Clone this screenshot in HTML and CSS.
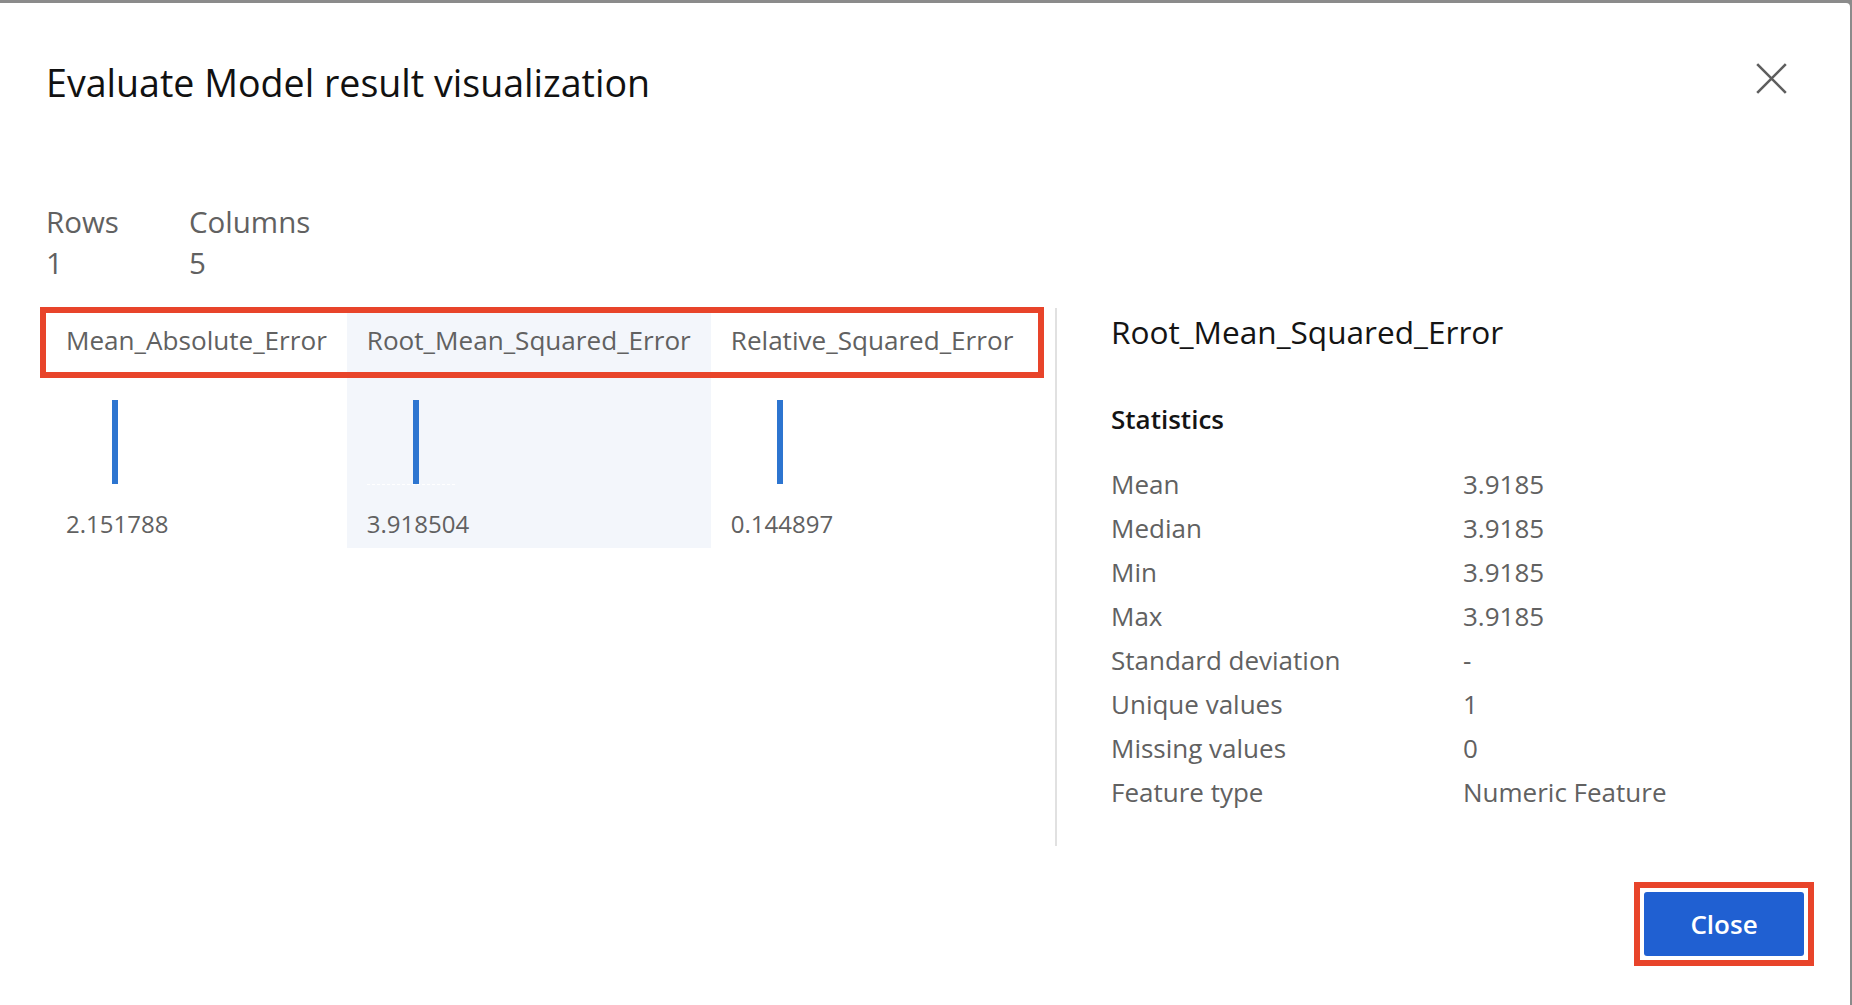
FILE: index.html
```html
<!DOCTYPE html>
<html lang="en">
<head>
<meta charset="utf-8">
<title>Evaluate Model result visualization</title>
<link rel="stylesheet" href="styles.css">
</head>
<body>
<div class="dialog">
  <header class="dlg-head">
    <h1 class="dlg-title">Evaluate Model result visualization</h1>
    <button class="icon-close" aria-label="Close">
      <svg width="31" height="31" viewBox="0 0 31 31"><path d="M1.2 1.2L29.8 29.8M29.8 1.2L1.2 29.8" stroke="#5e5e5e" stroke-width="2.6" fill="none"/></svg>
    </button>
  </header>

  <div class="meta">
    <div class="meta-item meta-rows">
      <div class="meta-label">Rows</div>
      <div class="meta-value">1</div>
    </div>
    <div class="meta-item">
      <div class="meta-label">Columns</div>
      <div class="meta-value">5</div>
    </div>
  </div>

  <div class="dlg-body">
    <div class="left-pane">
      <div class="cols">
        <div class="col">
          <div class="col-head">Mean_Absolute_Error</div>
          <div class="col-chart"><div class="bar"></div></div>
          <div class="col-value">2.151788</div>
        </div>
        <div class="col col-selected">
          <div class="col-head">Root_Mean_Squared_Error</div>
          <div class="col-chart"><div class="bar"></div></div>
          <div class="col-value">3.918504</div>
        </div>
        <div class="col">
          <div class="col-head">Relative_Squared_Error</div>
          <div class="col-chart"><div class="bar"></div></div>
          <div class="col-value">0.144897</div>
        </div>
      </div>
    </div>

    <div class="right-pane">
      <h2 class="detail-title">Root_Mean_Squared_Error</h2>
      <h3 class="stats-title">Statistics</h3>
      <dl class="stats">
        <dt>Mean</dt><dd>3.9185</dd>
        <dt>Median</dt><dd>3.9185</dd>
        <dt>Min</dt><dd>3.9185</dd>
        <dt>Max</dt><dd>3.9185</dd>
        <dt>Standard deviation</dt><dd>-</dd>
        <dt>Unique values</dt><dd>1</dd>
        <dt>Missing values</dt><dd>0</dd>
        <dt>Feature type</dt><dd>Numeric Feature</dd>
      </dl>
    </div>
  </div>

  <footer class="dlg-foot">
    <div class="annot">
      <button class="btn-primary">Close</button>
    </div>
  </footer>
</div>
</body>
</html>
```

FILE: styles.css
```css
html, body {
  margin: 0;
  padding: 0;
  height: 100%;
}

body {
  background: #8b8b8b;
  font-family: "Open Sans", "Noto Sans", sans-serif;
  overflow: hidden;
}

.dialog {
  margin: 3px 2px 0 0;
  height: 1002px;
  box-sizing: border-box;
  background: #ffffff;
  border-top-right-radius: 4px;
  padding: 55px 46px 0 46px;
}

/* header */
.dlg-head {
  display: flex;
  justify-content: space-between;
  align-items: flex-start;
}

.dlg-title {
  margin: 0;
  font-size: 37.6px;
  font-weight: 400;
  line-height: 50px;
  color: #111111;
}

.icon-close {
  margin: 5px 17px 0 0;
  padding: 0;
  border: 0;
  background: transparent;
  width: 31px;
  height: 31px;
  display: flex;
  cursor: pointer;
}

/* meta */
.meta {
  display: flex;
  margin-top: 93px;
  color: #616161;
  font-size: 29.5px;
  line-height: 41px;
}

.meta-rows {
  width: 143px;
}

/* body */
.dlg-body {
  display: flex;
  margin-top: 25px;
  min-height: 538px;
}

.left-pane {
  flex: 0 0 1009px;
  padding-top: 5px;
  box-sizing: border-box;
}

.cols {
  position: relative;
  display: flex;
  align-items: flex-start;
  width: max-content;
  padding-right: 5px;
}

.cols::before {
  content: "";
  position: absolute;
  left: -6px;
  top: -6px;
  right: -6px;
  height: 71px;
  border: 6px solid #e8442a;
  box-sizing: border-box;
  pointer-events: none;
  z-index: 2;
}

.col {
  padding: 0 20px 6px 20px;
  color: #616161;
  font-size: 26.1px;
}

.col-selected {
  background: #f3f6fb;
}

.col-head {
  height: 59px;
  line-height: 55px;
  white-space: nowrap;
}

.col-chart {
  margin-top: 29px;
  width: 88px;
  height: 84px;
  padding-left: 46px;
  box-sizing: border-box;
  border-bottom: 1px dashed #ffffff;
  display: flex;
  align-items: flex-end;
}

.bar {
  width: 6px;
  height: 84px;
  background: #2d75d0;
}

.col-value {
  margin-top: 21px;
  line-height: 36px;
  font-size: 24px;
}

/* right pane */
.right-pane {
  flex: 1 1 auto;
  border-left: 2px solid #e1e1e1;
  padding: 2px 0 32px 54px;
}

.detail-title {
  margin: 0;
  font-size: 31.6px;
  font-weight: 400;
  line-height: 44px;
  color: #141414;
}

.stats-title {
  margin: 47px 0 0 0;
  font-size: 26px;
  font-weight: 600;
  line-height: 36px;
  color: #141414;
}

.stats {
  margin: 25px 0 0 0;
  display: grid;
  grid-template-columns: 352px auto;
  font-size: 26px;
  line-height: 44px;
  color: #616161;
}

.stats dt,
.stats dd {
  margin: 0;
}

/* footer */
.dlg-foot {
  display: flex;
  justify-content: flex-end;
  margin-top: 36px;
  margin-right: -10px;
}

.annot {
  border: 6px solid #e8442a;
  padding: 4px;
  display: flex;
}

.btn-primary {
  width: 160px;
  height: 64px;
  border: 0;
  border-radius: 3px;
  background: #2060d2;
  color: #ffffff;
  font-family: "Open Sans", "Noto Sans", sans-serif;
  font-size: 26px;
  font-weight: 600;
  cursor: pointer;
}
```
